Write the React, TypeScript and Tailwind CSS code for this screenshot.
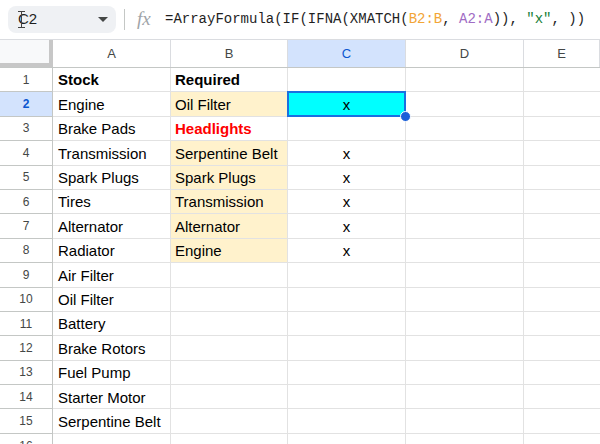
import React from "react";

const colA = [
  "Stock",
  "Engine",
  "Brake Pads",
  "Transmission",
  "Spark Plugs",
  "Tires",
  "Alternator",
  "Radiator",
  "Air Filter",
  "Oil Filter",
  "Battery",
  "Brake Rotors",
  "Fuel Pump",
  "Starter Motor",
  "Serpentine Belt",
  "",
];

const colB = [
  "Required",
  "Oil Filter",
  "Headlights",
  "Serpentine Belt",
  "Spark Plugs",
  "Transmission",
  "Alternator",
  "Engine",
];

const colC: Record<number, string> = { 2: "x", 4: "x", 5: "x", 6: "x", 7: "x", 8: "x" };

function Toolbar() {
  return (
    <div className="flex h-[40px] items-center bg-white border-b border-[#dadce0]">
      <div className="relative ml-[8px] flex h-[27px] w-[108px] items-center justify-between rounded-[8px] bg-[#eff1f4] pl-[10px] pr-[8px]">
        <span className="text-[15px] text-[#1f1f1f]">C2</span>
        <span className="absolute left-[13px] top-[5px] h-[17px] w-[1px] bg-[#444]" />
        <span className="absolute left-[10px] top-[5px] h-[1px] w-[7px] bg-[#444]" />
        <span className="absolute left-[10px] top-[21px] h-[1px] w-[7px] bg-[#444]" />
        <svg width="10" height="6" viewBox="0 0 10 6">
          <path d="M0 0h10L5 5z" fill="#444746" />
        </svg>
      </div>
      <div className="ml-[8px] h-[21px] w-[1px] bg-[#c4c7c5]" />
      <span className="ml-[12px] w-[20px] font-['Liberation_Serif',serif] text-[19px] italic text-[#a0a4a8]">
        fx
      </span>
      <span className="ml-[8px] whitespace-pre font-['Liberation_Mono',monospace] text-[14px] text-[#1f1f1f]">
        =ArrayFormula(IF(IFNA(XMATCH(
        <span className="text-[#f2a535]">B2:B</span>
        {", "}
        <span className="text-[#a06cc4]">A2:A</span>
        {")), "}
        <span className="text-[#188038]">"x"</span>
        {", ))"}
      </span>
    </div>
  );
}

function HeaderRow() {
  const cols = [
    { l: "A", w: "w-[118px]" },
    { l: "B", w: "w-[117px]" },
    { l: "C", w: "w-[118px]" },
    { l: "D", w: "w-[118px]" },
    { l: "E", w: "flex-1" },
  ];
  return (
    <div className="flex h-[28px] border-b border-[#c4c7c5]">
      <div className="w-[53px] shrink-0 border-r-[4px] border-b-[4px] border-[#c7c7c7] bg-[#f8f9fa]" />
      {cols.map((c) => (
        <div
          key={c.l}
          className={`${c.w} flex shrink-0 items-center justify-center border-r border-[#dadce0] text-[13px] ${
            c.l === "C" ? "bg-[#d3e3fd] text-[#0b57d0]" : "text-[#444746]"
          }`}
        >
          {c.l}
        </div>
      ))}
    </div>
  );
}

function Row({ i }: { i: number }) {
  const n = i + 1;
  const a = colA[i];
  const b = colB[i];
  const c = colC[n];
  const isYellow = n >= 2 && n <= 8 && n !== 3;
  const sel = n === 2;
  return (
    <div className="flex h-[24.4px] text-[15px] text-black">
      <div
        className={`flex w-[53px] shrink-0 items-center justify-center border-r border-b border-[#c4c7c5] text-[12px] ${
          sel ? "bg-[#d3e3fd] font-bold text-[#0b57d0]" : "bg-white text-[#444746]"
        }`}
      >
        {n}
      </div>
      <div
        className={`flex w-[118px] shrink-0 items-center border-r border-b border-[#e2e2e2] pl-[5px] pt-[2px] whitespace-nowrap ${
          n === 1 ? "font-bold" : ""
        }`}
      >
        {a}
      </div>
      <div
        className={`flex w-[117px] shrink-0 items-center border-r border-b border-[#e2e2e2] pl-[4px] pt-[2px] whitespace-nowrap ${
          isYellow ? "bg-[#fff2cc]" : "bg-white"
        } ${n === 1 ? "font-bold" : ""} ${n === 3 ? "font-bold text-[#ff0000]" : ""}`}
      >
        {b}
      </div>
      <div
        className={`relative flex w-[118px] shrink-0 items-center justify-center border-r border-b border-[#e2e2e2] pt-[2px] ${
          sel ? "bg-[#00ffff]" : ""
        }`}
      >
        {c}
        {sel && (
          <>
            <span className="absolute -left-[1px] -top-[1px] -right-[1px] -bottom-[1px] border-2 border-[#1a6fe0]" />
            <span className="absolute -right-[6px] -bottom-[6px] z-10 h-[11px] w-[11px] rounded-full border-[1.5px] border-white bg-[#1a5fd8]" />
          </>
        )}
      </div>
      <div className="w-[118px] shrink-0 border-r border-b border-[#e2e2e2]" />
      <div className="flex-1 border-b border-[#e2e2e2]" />
    </div>
  );
}

export default function App() {
  return (
    <div className="h-[444px] w-[600px] overflow-hidden bg-white font-['Liberation_Sans',Arial,sans-serif]">
      <Toolbar />
      <HeaderRow />
      {colA.map((_, i) => (
        <Row key={i} i={i} />
      ))}
    </div>
  );
}
